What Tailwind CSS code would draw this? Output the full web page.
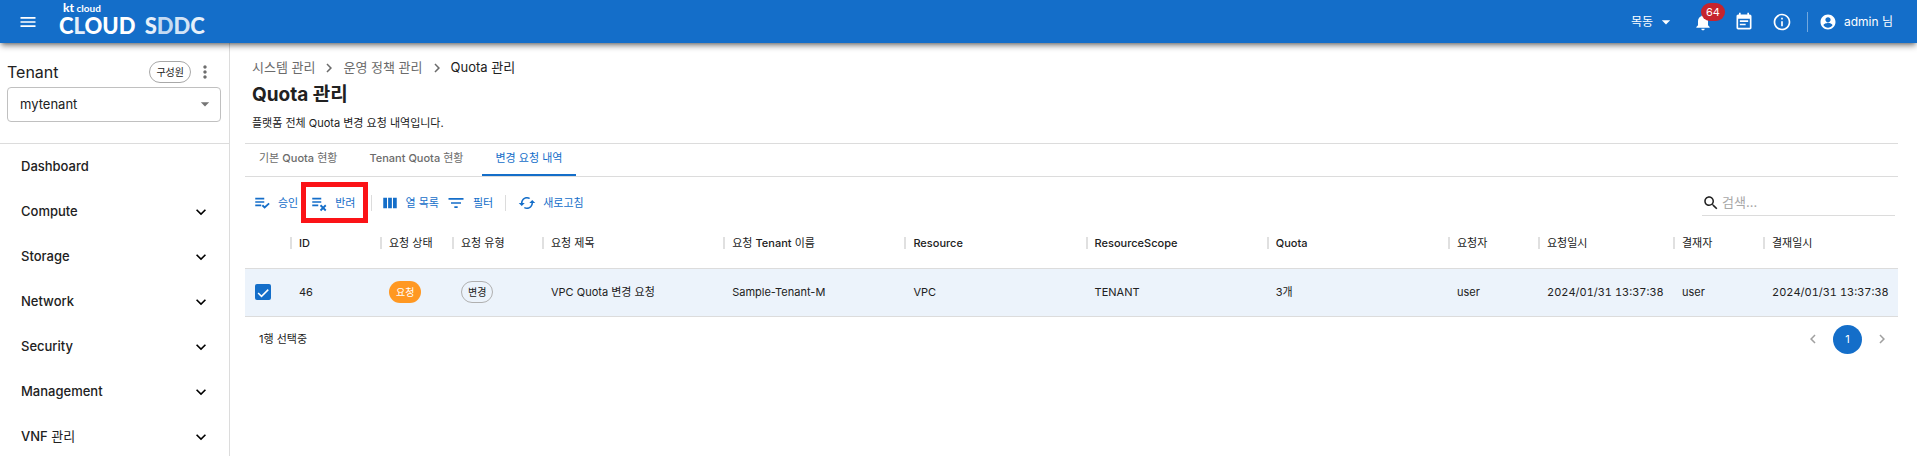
<!DOCTYPE html>
<html lang="ko">
<head>
<meta charset="utf-8">
<meta name="viewport" content="width=device-width, initial-scale=1">
<title>Quota 관리 - CLOUD SDDC</title>
<script src="https://cdn.jsdelivr.net/npm/@tailwindcss/browser@4"></script>
</head>
<body class="flex h-screen flex-col overflow-hidden bg-white font-[Inter,'Noto_Sans_CJK_KR',sans-serif] text-[11px] text-[#212121]">

<svg class="hidden" aria-hidden="true">
  <symbol id="down" viewBox="0 0 24 24"><path d="M7.41 8.59 12 13.17l4.59-4.58L18 10l-6 6-6-6z"/></symbol>
  <symbol id="right" viewBox="0 0 24 24"><path d="M10 6 8.59 7.41 13.17 12l-4.58 4.59L10 18l6-6z"/></symbol>
  <symbol id="left" viewBox="0 0 24 24"><path d="M15.41 7.41 14 6l-6 6 6 6 1.41-1.41L10.83 12z"/></symbol>
</svg>

<header class="relative z-10 flex h-[43px] shrink-0 items-center bg-[#146ec9] pr-6 pl-[18px] text-white shadow-md shadow-black/40">
  <button type="button" aria-label="메뉴" class="mr-[21px]">
    <svg class="size-5 fill-current" viewBox="0 0 24 24"><path d="M3 18h18v-2H3zm0-5h18v-2H3zm0-7v2h18V6z"/></svg>
  </button>
  <a href="#" class="flex flex-col pb-1 font-[Lato,sans-serif]">
    <span class="pl-1 text-[10px] leading-[12px] font-bold"><span class="text-[12px] font-black">kt</span> cloud</span>
    <span class="text-[22px] leading-[23px] font-black whitespace-pre">C<span class="text-[#e3eefa]">L</span>OUD <span class="ml-1 text-[#e6f0fa]">S</span><span class="text-[#c3daf2]">D</span><span class="text-[#d3e4f6]">D</span><span class="text-[#e6f0fa]">C</span></span>
  </a>
  <div class="ml-auto flex items-center">
    <button type="button" class="flex items-center gap-[3px] text-xs">목동
      <svg class="size-5 fill-current" viewBox="0 0 24 24"><path d="m7 10 5 5 5-5z"/></svg>
    </button>
    <button type="button" aria-label="알림 64건" class="relative ml-[17px]">
      <svg class="size-5 fill-current" viewBox="0 0 24 24"><path d="M12 22c1.1 0 2-.9 2-2h-4c0 1.1.89 2 2 2m6-6v-5c0-3.07-1.64-5.64-4.5-6.32V4c0-.83-.67-1.5-1.5-1.5s-1.5.67-1.5 1.5v.68C7.63 5.36 6 7.92 6 11v5l-2 2v1h16v-1z"/></svg>
      <span class="absolute -top-[9px] left-2 rounded-full bg-[#c6242e] px-[5px] text-[11px] leading-[18px]">64</span>
    </button>
    <button type="button" aria-label="일정" class="ml-[21px]">
      <svg class="size-5 fill-current" viewBox="0 0 24 24"><path d="M17 10H7v2h10zm2-7h-1V1h-2v2H8V1H6v2H5c-1.11 0-1.99.9-1.99 2L3 19c0 1.1.89 2 2 2h14c1.1 0 2-.9 2-2V5c0-1.1-.9-2-2-2m0 16H5V8h14zm-5-5H7v2h7z"/></svg>
    </button>
    <button type="button" aria-label="정보" class="ml-[18px]">
      <svg class="size-5 fill-current" viewBox="0 0 24 24"><path d="M11 7h2v2h-2zm0 4h2v6h-2zm1-9C6.48 2 2 6.48 2 12s4.48 10 10 10 10-4.48 10-10S17.52 2 12 2m0 18c-4.41 0-8-3.59-8-8s3.59-8 8-8 8 3.59 8 8-3.59 8-8 8"/></svg>
    </button>
    <span class="mr-[11px] ml-[15px] h-5 w-px bg-white/40"></span>
    <button type="button" class="flex items-center gap-[7px] text-xs">
      <svg class="size-[18px] fill-current" viewBox="0 0 24 24"><path d="M12 2C6.48 2 2 6.48 2 12s4.48 10 10 10 10-4.48 10-10S17.52 2 12 2m0 3.5c1.93 0 3.5 1.57 3.5 3.5s-1.57 3.500-3.500 3.500S8.500 10.930 8.500 9s1.570-3.500 3.500-3.500M12 19.500c-2.500 0-4.700-1.200-6-3.100.03-2 4-3.100 6-3.100s5.970 1.100 6 3.100c-1.300 1.900-3.500 3.100-6 3.100"/></svg>
      admin 님
    </button>
  </div>
</header>

<div class="flex min-h-0 flex-1">
  <aside class="w-[230px] shrink-0 border-r border-[#dcdcdc]">
    <div class="flex h-[101px] flex-col border-b border-[#dcdcdc] pt-[18px] pr-2 pl-[7px]">
      <div class="flex h-[22px] items-center pr-[6px]">
        <h2 class="text-[16px]"><label for="tenant">Tenant</label></h2>
        <span class="ml-auto rounded-full border border-[#a8a8a8] px-[6px] text-[10px] leading-5">구성원</span>
        <button type="button" aria-label="더보기" class="ml-1">
          <svg class="size-5 fill-[#6e6e6e]" viewBox="0 0 24 24"><path d="M12 8c1.100 0 2-.9 2-2s-.9-2-2-2-2 .9-2 2 .9 2 2 2m0 2c-1.100 0-2 .9-2 2s.9 2 2 2 2-.9 2-2-.9-2-2-2m0 6c-1.100 0-2 .9-2 2s.9 2 2 2 2-.9 2-2-.9-2-2-2"/></svg>
        </button>
      </div>
      <div class="relative mt-1">
        <select id="tenant" class="h-[35px] w-full appearance-none rounded border border-[#c0c0c0] bg-white px-3 text-[13px]"><option>mytenant</option></select>
        <svg class="pointer-events-none absolute top-[7px] right-[6px] size-5 fill-[#757575]" viewBox="0 0 24 24"><path d="m7 10 5 5 5-5z"/></svg>
      </div>
    </div>
    <nav class="flex flex-col text-[13px] font-medium">
      <a href="#" class="flex h-[45px] items-center pl-[21px]">Dashboard</a>
      <button type="button" class="flex h-[45px] items-center justify-between pr-[18px] pl-[21px]">Compute<svg class="size-5"><use href="#down"/></svg></button>
      <button type="button" class="flex h-[45px] items-center justify-between pr-[18px] pl-[21px]">Storage<svg class="size-5"><use href="#down"/></svg></button>
      <button type="button" class="flex h-[45px] items-center justify-between pr-[18px] pl-[21px]">Network<svg class="size-5"><use href="#down"/></svg></button>
      <button type="button" class="flex h-[45px] items-center justify-between pr-[18px] pl-[21px]">Security<svg class="size-5"><use href="#down"/></svg></button>
      <button type="button" class="flex h-[45px] items-center justify-between pr-[18px] pl-[21px]">Management<svg class="size-5"><use href="#down"/></svg></button>
      <button type="button" class="flex h-[45px] items-center justify-between pr-[18px] pl-[21px]"><span>VNF <span class="font-normal">관리</span></span><svg class="size-5"><use href="#down"/></svg></button>
    </nav>
  </aside>

  <main class="min-w-0 flex-1 pr-[19px] pl-[15px]">
    <div class="h-[101px] border-b border-[#dcdcdc] pt-4 pl-[7px]">
      <nav class="flex h-[18px] items-center text-[13px] text-[#6b6b6b]" aria-label="breadcrumb">
        <a href="#">시스템 관리</a>
        <svg class="mx-[5px] size-[18px] fill-current"><use href="#right"/></svg>
        <a href="#">운영 정책 관리</a>
        <svg class="mx-[5px] size-[18px] fill-current"><use href="#right"/></svg>
        <span class="text-[#212121]">Quota 관리</span>
      </nav>
      <h1 class="mt-[5px] text-[19px] leading-[26px] font-bold">Quota 관리</h1>
      <p class="mt-[6px] leading-[18px]">플랫폼 전체 Quota 변경 요청 내역입니다.</p>
    </div>

    <div role="tablist" class="flex h-[33px] gap-[4px] border-b border-[#dcdcdc] text-[#6b6b6b]">
      <button type="button" role="tab" class="px-[14px] pb-1">기본 <span class="font-medium">Quota</span> 현황</button>
      <button type="button" role="tab" class="px-[14px] pb-1"><span class="font-medium">Tenant Quota</span> 현황</button>
      <button type="button" role="tab" aria-selected="true" class="border-b-2 border-[#146ec9] px-[14px] pb-[2px] text-[#146ec9]">변경 요청 내역</button>
    </div>

    <div class="flex h-[43px] items-center pt-[9px] pr-[3px] pl-2 text-[#146ec9]">
      <button type="button" class="flex items-center gap-[7px]">
        <svg class="size-[18px] fill-current" viewBox="0 0 24 24"><path d="M3 5h12v2.200H3zm0 4.500h12v2.200H3zM3 14h8v2.200H3z"/><path d="m12.500 15 3 3 6-5.500" fill="none" stroke="currentColor" stroke-width="2.400"/></svg>승인
      </button>
      <button type="button" class="relative ml-[12px] flex items-center gap-[7px]">
        <svg class="size-[18px] fill-current" viewBox="0 0 24 24"><path d="M3 5h12v2.200H3zm0 4.500h12v2.200H3zM3 14h8v2.200H3z"/><path d="m14 15 7 7m0-7-7 7" fill="none" stroke="currentColor" stroke-width="2.400"/></svg>반려
        <span class="absolute -top-[12px] -left-[9px] h-[41px] w-[67px] border-[5px] border-[#fb1317]"></span>
      </button>
      <span class="mr-[9px] ml-[15px] h-4 w-px bg-[#dcdcdc]"></span>
      <button type="button" class="flex items-center gap-[7px]">
        <svg class="size-[18px] fill-current" viewBox="0 0 24 24"><path d="M3 5h5v14H3zm6.500 0h5v14h-5zM16 5h5v14h-5z"/></svg>열 목록
      </button>
      <button type="button" class="ml-[7px] flex items-center gap-[7px]">
        <svg class="size-5 fill-current" viewBox="0 0 24 24"><path d="M10 18h4v-2h-4zM3 6v2h18V6zm3 7h12v-2H6z"/></svg>필터
      </button>
      <span class="mx-3 h-4 w-px bg-[#dcdcdc]"></span>
      <button type="button" class="flex items-center gap-[7px]">
        <svg class="size-[18px] fill-current" viewBox="0 0 24 24"><path d="m19 8-4 4h3c0 3.310-2.690 6-6 6-1.010 0-1.970-.25-2.800-.7l-1.460 1.460C8.970 19.540 10.430 20 12 20c4.420 0 8-3.580 8-8h3zM6 12c0-3.310 2.690-6 6-6 1.010 0 1.970.25 2.800.7l1.460-1.460C15.030 4.460 13.570 4 12 4c-4.420 0-8 3.580-8 8H1l4 4 4-4z"/></svg>새로고침
      </button>
      <label class="ml-auto flex h-[26px] w-[193px] items-center gap-[2px] border-b border-[#dcdcdc]">
        <svg class="size-[18px] fill-[#212121]" viewBox="0 0 24 24"><path d="M15.500 14h-.79l-.28-.27C15.410 12.590 16 11.110 16 9.500 16 5.910 13.090 3 9.500 3S3 5.910 3 9.500 5.910 16 9.500 16c1.610 0 3.090-.59 4.230-1.570l.27.28v.79l5 4.990L20.490 19zm-6 0C7.010 14 5 11.990 5 9.500S7.010 5 9.500 5 14 7.010 14 9.500 11.990 14 9.500 14"/></svg>
        <input type="text" aria-label="검색" placeholder="검색…" class="min-w-0 flex-1 text-[13px] outline-none placeholder:text-[#a8a8a8]">
      </label>
    </div>

    <table class="w-full table-fixed border-collapse text-left">
      <colgroup><col class="w-[45px]"><col class="w-[90px]"><col class="w-[72px]"><col class="w-[90px]"><col><col><col><col><col><col class="w-[90px]"><col class="w-[135px]"><col class="w-[90px]"><col class="w-[135px]"></colgroup>
      <thead>
        <tr class="h-[48px] border-b border-[#dcdcdc] [&>th]:p-0 [&>th]:pb-[2px] [&>th]:font-medium">
          <th aria-label="선택"></th>
          <th><div class="h-3 border-l-2 border-[#e0e0e0] pl-[7px] leading-3">ID</div></th>
          <th><div class="h-3 border-l-2 border-[#e0e0e0] pl-[7px] leading-3 font-normal">요청 상태</div></th>
          <th><div class="h-3 border-l-2 border-[#e0e0e0] pl-[7px] leading-3 font-normal">요청 유형</div></th>
          <th><div class="h-3 border-l-2 border-[#e0e0e0] pl-[7px] leading-3 font-normal">요청 제목</div></th>
          <th><div class="h-3 border-l-2 border-[#e0e0e0] pl-[7px] leading-3 font-normal">요청 <span class="font-medium">Tenant</span> 이름</div></th>
          <th><div class="h-3 border-l-2 border-[#e0e0e0] pl-[7px] leading-3">Resource</div></th>
          <th><div class="h-3 border-l-2 border-[#e0e0e0] pl-[7px] leading-3">ResourceScope</div></th>
          <th><div class="h-3 border-l-2 border-[#e0e0e0] pl-[7px] leading-3">Quota</div></th>
          <th><div class="h-3 border-l-2 border-[#e0e0e0] pl-[7px] leading-3 font-normal">요청자</div></th>
          <th><div class="h-3 border-l-2 border-[#e0e0e0] pl-[7px] leading-3 font-normal">요청일시</div></th>
          <th><div class="h-3 border-l-2 border-[#e0e0e0] pl-[7px] leading-3 font-normal">결재자</div></th>
          <th><div class="h-3 border-l-2 border-[#e0e0e0] pl-[7px] leading-3 font-normal">결재일시</div></th>
        </tr>
      </thead>
      <tbody>
        <tr class="h-[48px] border-b border-[#dcdcdc] bg-[#ecf3fb] [&>td]:p-0 [&>td]:pl-[9px] [&>td]:whitespace-nowrap">
          <td>
            <label class="relative block size-[18px]">
              <input type="checkbox" checked aria-label="46 선택" class="m-px block size-4 appearance-none rounded-xs bg-[#146ec9]">
              <svg class="pointer-events-none absolute inset-0 size-[18px] fill-none stroke-white stroke-2" viewBox="0 0 24 24"><path d="m5.500 12 4.500 4.500 9-9"/></svg>
            </label>
          </td>
          <td>46</td>
          <td><span class="inline-block rounded-full bg-[#ff9822] px-[7px] text-[10px] leading-[22px] text-white">요청</span></td>
          <td><span class="inline-block rounded-full border border-[#b0b0b0] px-[6px] text-[10px] leading-5">변경</span></td>
          <td>VPC Quota 변경 요청</td>
          <td>Sample-Tenant-M</td>
          <td>VPC</td>
          <td>TENANT</td>
          <td>3개</td>
          <td>user</td>
          <td class="tabular-nums">2024/01/31 13:37:38</td>
          <td>user</td>
          <td class="tabular-nums">2024/01/31 13:37:38</td>
        </tr>
      </tbody>
    </table>

    <div class="flex h-[45px] items-center pr-[7px] pl-[14px]">
      <span>1행 선택중</span>
      <nav class="ml-auto flex items-center gap-[11px] text-[#a0a0a0]" aria-label="페이지">
        <button type="button" aria-label="이전"><svg class="size-[18px] fill-current"><use href="#left"/></svg></button>
        <button type="button" class="size-[29px] rounded-full bg-[#146ec9] text-white">1</button>
        <button type="button" aria-label="다음"><svg class="size-[18px] fill-current"><use href="#right"/></svg></button>
      </nav>
    </div>
  </main>
</div>
</body>
</html>
